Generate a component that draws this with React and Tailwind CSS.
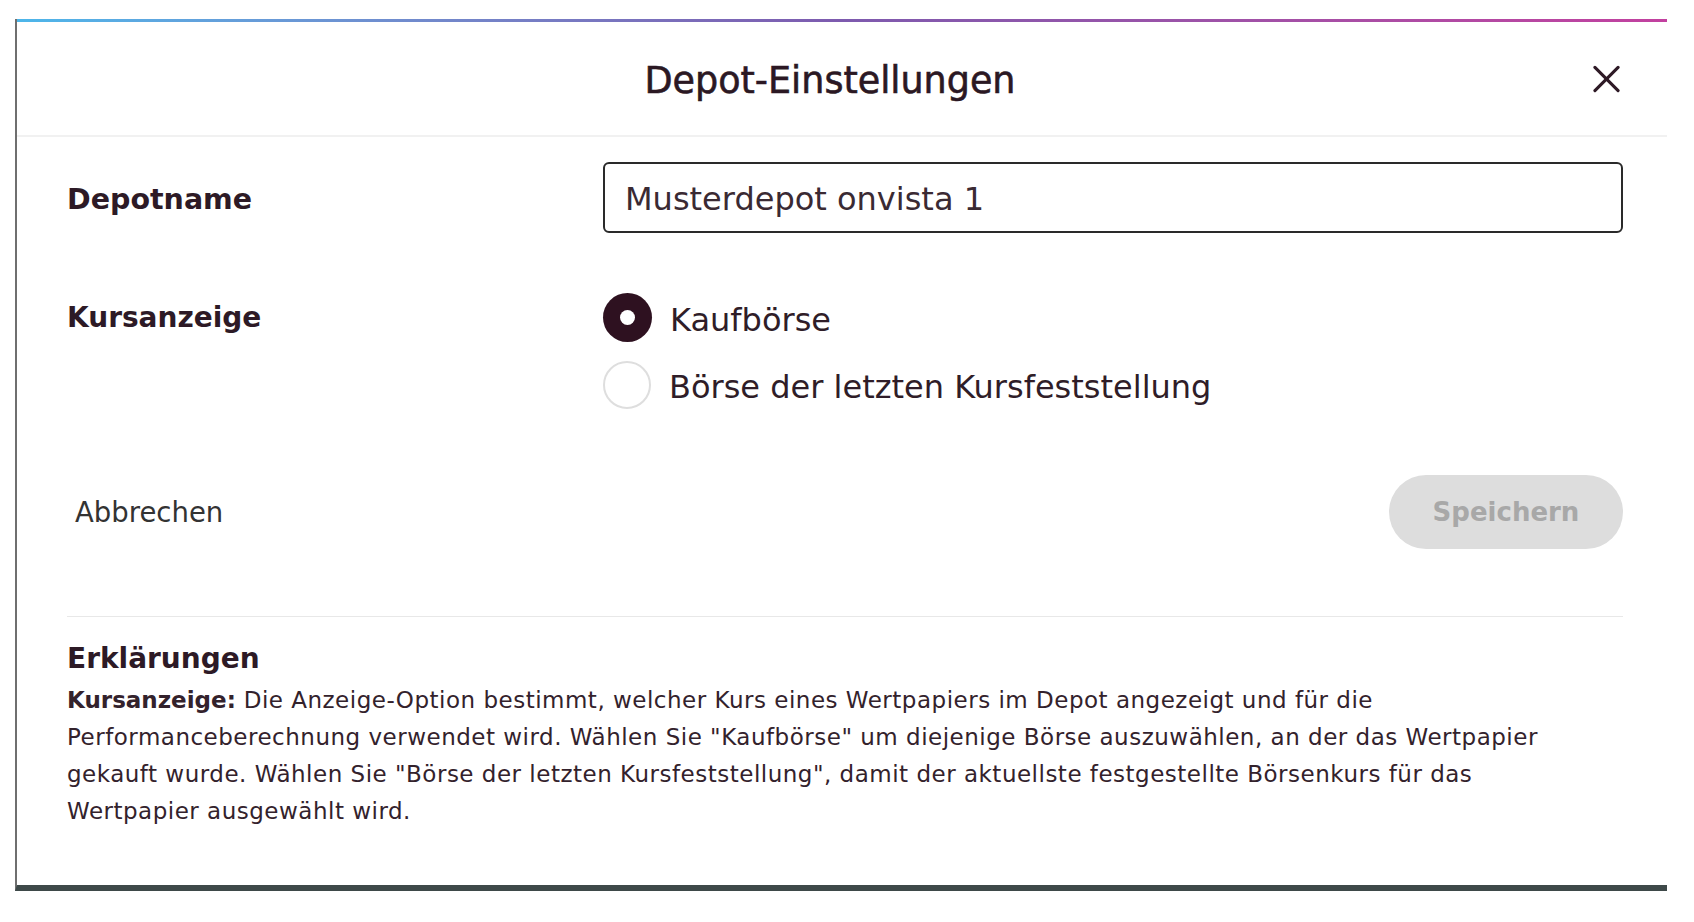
import React, { useState } from "react";

function Radio({ checked, label, onClick }) {
  return (
    <button type="button" className="flex items-center gap-[18px] text-left" onClick={onClick}>
      {checked ? (
        <span className="flex h-[49px] w-[49px] items-center justify-center rounded-full bg-[#2e1120]">
          <span className="h-[15px] w-[15px] rounded-full bg-white" />
        </span>
      ) : (
        <span className="h-[48px] w-[48px] rounded-full border-2 border-[#dedede] bg-white" />
      )}
      <span className="pt-[4px] text-[32px] leading-[40px] text-[#2f1d28]">{label}</span>
    </button>
  );
}

export default function App() {
  const [name, setName] = useState("Musterdepot onvista 1");
  const [mode, setMode] = useState("kauf");

  return (
    <div className="min-h-screen bg-white pt-[19px] pl-[15px] font-['DejaVu_Sans',sans-serif] text-[#2d1a26]">
      <div className="w-[1652px] border-l-2 border-b-[6px] border-l-[#6f6f6f] border-b-[#3e4949]">
        <div className="h-[3px] bg-gradient-to-r from-[#4cb6ea] via-[#7d5aae] to-[#c2409f]" />

        <div className="flex h-[113px] items-center pl-[50px] pr-[47px]">
          <h1 className="flex-1 pt-[5px] text-center text-[36.5px] text-[#2b1823] [-webkit-text-stroke:0.6px_#2b1823]">Depot-Einstellungen</h1>
          <button type="button" className="flex h-[28px] w-[27px] items-center justify-center">
            <svg width="28" height="28" viewBox="0 0 28 28" fill="none" stroke="#2e1a26" strokeWidth="3.2" strokeLinecap="round">
              <path d="M2 2 L26 26" />
              <path d="M26 2 L2 26" />
            </svg>
          </button>
        </div>
        <div className="h-[2px] bg-[#f1f1f1]" />

        <div className="pl-[50px] pr-[44px] pt-[25px]">
          <div className="flex items-center">
            <label className="w-[536px] pt-[6px] text-[28.5px] font-bold">Depotname</label>
            <input
              className="h-[71px] flex-1 rounded-[6px] border-2 border-[#2a2a2a] px-[20px] pt-[2px] text-[32px] text-[#3a2a33] outline-none"
              value={name}
              onChange={(e) => setName(e.target.value)}
            />
          </div>

          <div className="mt-[60px] flex">
            <div className="w-[536px] pt-[4px] text-[28px] font-bold">Kursanzeige</div>
            <div className="flex flex-col gap-[19px]">
              <Radio checked={mode === "kauf"} label="Kaufbörse" onClick={() => setMode("kauf")} />
              <Radio checked={mode === "letzte"} label="Börse der letzten Kursfeststellung" onClick={() => setMode("letzte")} />
            </div>
          </div>

          <div className="mt-[66px] flex items-center justify-between">
            <button type="button" className="pl-[8px] pt-[2px] text-[27.5px] text-[#333]">Abbrechen</button>
            <button type="button" disabled className="h-[74px] w-[234px] rounded-full bg-[#dddddd] text-[26px] font-bold text-[#a8a8a8]">
              Speichern
            </button>
          </div>

          <div className="mt-[67px] h-[1px] bg-[#e8e8e8]" />

          <div className="pt-[24px] pb-[55px]">
            <h2 className="text-[28px] font-bold leading-[36px]">Erklärungen</h2>
            <p className="mt-[5px] text-[23px] leading-[37px] tracking-[0.5px] text-[#33222c]">
              <b className="tracking-[0px]">Kursanzeige:</b> Die Anzeige-Option bestimmt, welcher Kurs eines Wertpapiers im Depot angezeigt und für die
              <br />
              Performanceberechnung verwendet wird. Wählen Sie "Kaufbörse" um diejenige Börse auszuwählen, an der das Wertpapier
              <br />
              gekauft wurde. Wählen Sie "Börse der letzten Kursfeststellung", damit der aktuellste festgestellte Börsenkurs für das
              <br />
              Wertpapier ausgewählt wird.
            </p>
          </div>
        </div>
      </div>
    </div>
  );
}
